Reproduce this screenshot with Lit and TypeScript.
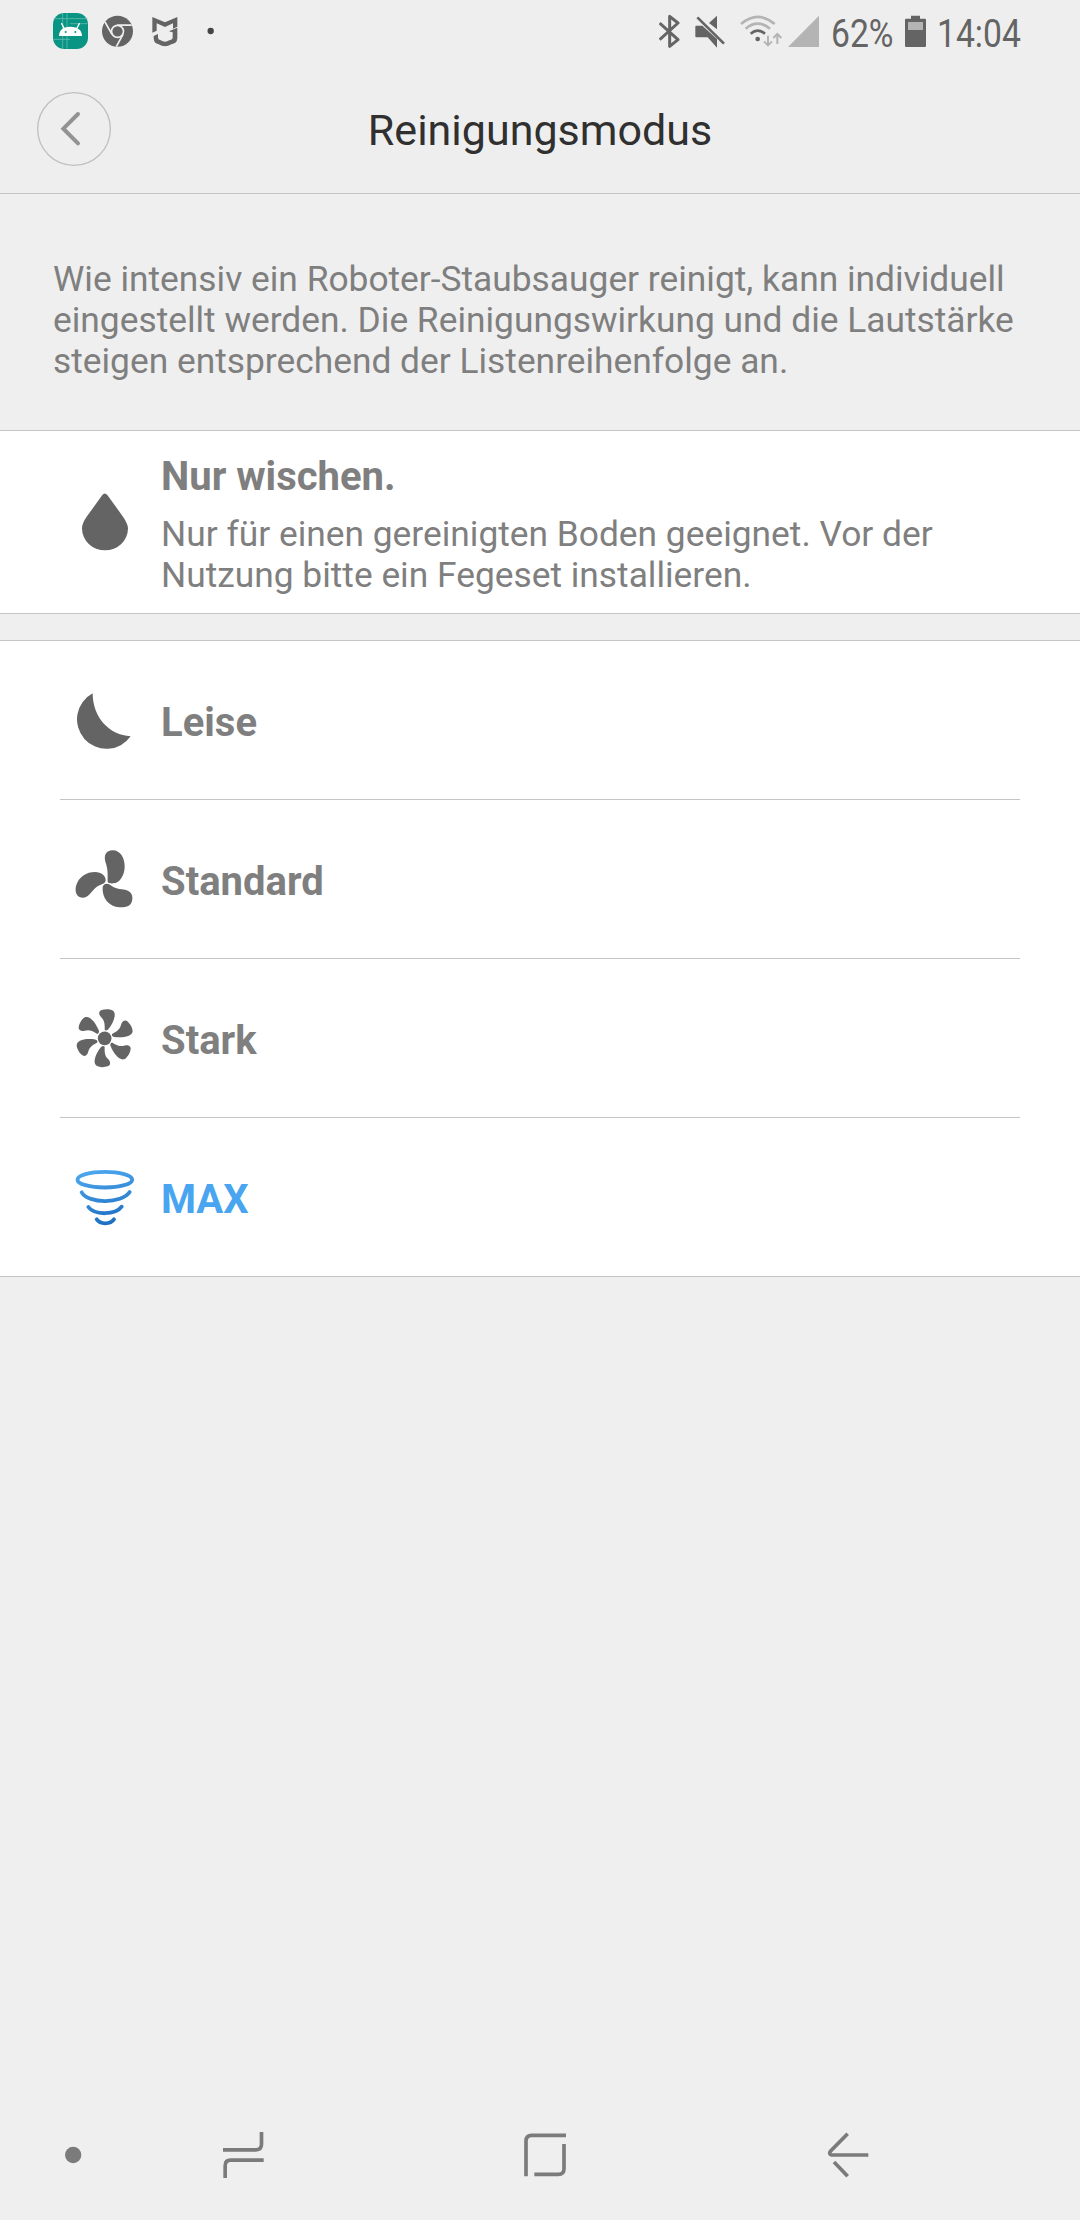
import { LitElement, html, css, svg } from "lit";
import { customElement, property } from "lit/decorators.js";
import { classMap } from "lit/directives/class-map.js";

// Icon coordinates are drawn at three units per CSS pixel.

@customElement("status-bar")
class StatusBar extends LitElement {
  static styles = css`
    :host { display: flex; height: 64px; align-items: flex-start; color: #646464; font-family: Roboto, sans-serif; }
    svg { display: block; height: 64px; flex: none; }
    .apps, .system { display: flex; }
    .apps { padding-left: 53px; flex: 1; }
    .android { width: 35px; }
    .chrome { width: 31px; margin-left: 14px; }
    .mi { width: 26px; margin-left: 19px; }
    .more { width: 7px; margin-left: 29px; }
    .system { padding-right: 58px; }
    .bt { width: 21px; }
    .mute { width: 30px; margin-left: 15px; }
    .wifi { width: 43px; margin-left: 15px; }
    .signal { width: 31px; margin-left: 5px; }
    .label { display: block; font-size: 38.5px; line-height: 68px; height: 64px; white-space: nowrap; transform: scaleX(0.875); transform-origin: 0 50%; }
    .percent { width: 62px; margin-left: 12px; }
    .battery { width: 21px; margin-left: 12px; }
    .time { width: 85px; margin-left: 11px; }
  `;
  render() {
    return html`
      <div class="apps">
        <svg class="android" viewBox="39 0 105 192">
          <rect x="39" y="39" width="105" height="108" rx="34" fill="#0a9484" />
          <path d="M68 40V146M81 40V146M40 56H143M90 71H143M40 118H90" stroke="#6fc5ba" stroke-width="2" fill="none" />
          <path d="M57 108C57 92 67 80 91 80S126 92 126 108Z" fill="#fff" />
          <path d="M72 84L65 71M111 84L118 71" stroke="#fff" stroke-width="4" stroke-linecap="round" />
          <circle cx="77" cy="96" r="3" fill="#0a9484" /><circle cx="106" cy="96" r="3" fill="#0a9484" />
        </svg>
        <svg class="chrome" viewBox="186 0 93 192">
          <circle cx="232.500" cy="94" r="46.500" fill="#646464" />
          <circle cx="232.500" cy="94" r="18" fill="#646464" stroke="#eee" stroke-width="5" />
          <path d="M232 75.500H275M216 103L195 66M249 103L229 140" stroke="#eee" stroke-width="5" fill="none" />
        </svg>
        <svg class="mi" viewBox="336 0 78 192" fill="#646464">
          <path d="M337 51L375 67L412 51V80L399 86V70L375 81L350 70V92L337 98Z" />
          <path d="M341 108L354 102V114Q355 120 362 121Q375 129 388 121Q397 120 398 114V97L387 94L412 83V115Q411 131 394 133Q375 145 356 133Q342 131 341 115Z" />
        </svg>
        <svg class="more" viewBox="501 0 21 192"><circle cx="512" cy="93" r="9.500" fill="#444" /></svg>
      </div>
      <div class="system">
        <svg class="bt" viewBox="57 0 63 192" fill="none" stroke="#646464" stroke-width="9">
          <path d="M59 69L114 119L89 139V49L114 69L59 119" stroke-linejoin="round" />
        </svg>
        <svg class="mute" viewBox="165 0 90 192" fill="#646464">
          <path d="M168 77H187L231 117V143L203 112H168Q166 112 166 108V81Q166 77 168 77ZM231 47V88L207 69Z" />
          <path d="M172 52L252 131" stroke="#646464" stroke-width="8" />
        </svg>
        <svg class="wifi" viewBox="300 0 129 192" fill="none" stroke="#b4b4b4" stroke-width="8">
          <path d="M303 72Q353 29 404 72M317 86Q353 56 390 86" />
          <path d="M332 101Q353 83 375 101" stroke="#646464" />
          <circle cx="353" cy="117" r="7" fill="#646464" stroke="none" />
          <path d="M384 107V134M372 124L384 136L396 124M412 132V104M400 114L412 102L424 114" stroke-width="6" />
        </svg>
        <svg class="signal" viewBox="444 0 93 192"><path d="M444 141H537V47Z" fill="#b4b4b4" /></svg>
        <span class="label percent">62%</span>
        <svg class="battery" viewBox="255 0 63 192">
          <path d="M273 47H300V56H315Q318 56 318 59V138Q318 141 315 141H258Q255 141 255 138V59Q255 56 258 56H273Z" fill="#646464" />
          <rect x="264" y="66" width="45" height="24" fill="#b4b4b4" />
        </svg>
        <span class="label time">14:04</span>
      </div>
    `;
  }
}

const icons = {
  drop: svg`<svg viewBox="105 33 180 546" fill="#646464"><path d="M187 225Q194 216 202 225L249 290Q264 312 264 325A69 66 0 0 1 126 325Q126 310 141 289Z"/></svg>`,
  moon: svg`<svg viewBox="75 -87 180 474" fill="#646464"><path d="M128 70A88.500 88.500 0 1 0 242 199C178 196 128 142 128 70Z"/></svg>`,
  fan: svg`<svg viewBox="75 -90 180 474" fill="#646464">
    <path d="M173 155C173 132 174 118 167 98C160 76 168 61 188 61C212 61 224 85 224 110C224 136 208 160 190 160Q175 161 173 155Z"/>
    <path d="M167 150C167 164 151 161 136 174C121 188 116 203 98 203C80 203 74 186 78 168C86 140 110 126 135 126C155 126 167 138 167 150Z"/>
    <path d="M158 171C160 161 172 158 181 165C195 177 209 176 228 180C245 184 250 200 246 213C243 228 228 233 208 232C178 230 155 205 158 171Z"/>
  </svg>`,
  turbine: svg`<svg viewBox="75 -93 180 474" fill="#646464">
    <circle cx="164" cy="145" r="20.500"/>
    ${[0, 60, 120, 180, 240, 300].map(
      (a) => svg`<path transform=${`rotate(${a} 164 144.500)`} d="M164 119C165 98 162 90 153 81C145 73 146 62 155 60C167 56 184 57 190 63C200 73 191 98 175 118Q169 124 164 119Z"/>`,
    )}
  </svg>`,
  tornado: svg`<svg viewBox="75 -96 180 474" fill="none" stroke="url(#swirl)" stroke-width="11.500" stroke-linecap="round">
    <defs><linearGradient id="swirl" gradientUnits="userSpaceOnUse" x1="140" y1="60" x2="180" y2="228"><stop stop-color="#4ba6ee"/><stop offset="1" stop-color="#1c6cc0"/></linearGradient></defs>
    <ellipse cx="164.500" cy="89" rx="82" ry="23.500"/>
    <path d="M95 127C115 162 215 162 239 126M115 171C133 196 196 196 215 170M140 208C150 224 182 224 192 208"/>
  </svg>`,
};

@customElement("mode-row")
class ModeRow extends LitElement {
  @property() icon: keyof typeof icons = "drop";
  @property() name = "";
  @property() detail = "";
  @property({ type: Boolean }) selected = false;

  static styles = css`
    :host { display: flex; align-items: center; padding-left: 75px; color: #7f7f7f; font-family: Roboto, sans-serif; }
    .icon { display: flex; width: 60px; margin-right: 26px; }
    svg { display: block; width: 60px; }
    .name { font-size: 40px; line-height: 48px; font-weight: 700; padding-top: 5px; }
    .detail { width: 800px; font-size: 35.34px; line-height: 41px; }
    .withDetail { padding: 4px 0 13px; }
    .selected { color: #4aa5f0; }
  `;
  render() {
    return html`
      <div class="icon">${icons[this.icon]}</div>
      <div>
        <div class=${classMap({ name: true, selected: this.selected, withDetail: !!this.detail })}>${this.name}</div>
        ${this.detail ? html`<div class="detail">${this.detail}</div>` : ""}
      </div>
    `;
  }
}

@customElement("nav-bar")
class NavBar extends LitElement {
  static styles = css`
    :host { display: flex; align-items: center; height: 130px; padding-left: 65px; }
    svg { display: block; height: 90px; fill: none; stroke: #7b7b7b; stroke-width: 11px; }
    .dot { width: 17px; fill: #7b7b7b; stroke: none; }
    .recents { width: 41px; margin-left: 141px; }
    .home { width: 42px; margin-left: 260px; }
    .back { width: 42px; margin-left: 261px; }
  `;
  render() {
    return html`
      <svg class="dot" viewBox="75 0 51 270"><circle cx="99.500" cy="135" r="24.500" /></svg>
      <svg class="recents" viewBox="549 0 123 270">
        <path d="M549 119.500H648Q664.500 119.500 664.500 103V66M671 150.500H572Q555.500 150.500 555.500 167V204" />
      </svg>
      <svg class="home" viewBox="72 0 126 270">
        <path d="M198 76H95Q78 76 78 93V199M192 102V176Q192 193 175 193H103" />
      </svg>
      <svg class="back" viewBox="982 0 126 270">
        <path d="M1106 135H996Q986 132 993 123L1044 71M1003 156L1044 199" />
      </svg>
    `;
  }
}

@customElement("app-root")
class AppRoot extends LitElement {
  static styles = css`
    :host { display: flex; flex-direction: column; height: 2220px; width: 1080px; background: #efefef; font-family: Roboto, sans-serif; overflow: hidden; }
    .top { background: #eee; border-bottom: 1px solid #c4c4c4; }
    header { display: grid; grid-template-columns: 74px 1fr 74px; align-items: center; padding: 0 37px; height: 129px; }
    .back { display: block; width: 74px; height: 74px; }
    h1 { margin: 0; text-align: center; font-weight: 400; font-size: 43px; line-height: 52px; color: #303030; padding-top: 2px; }
    .intro { box-sizing: border-box; height: 236px; margin: 0; padding: 65px 50px 0 53px; font-size: 35.34px; line-height: 41px; color: #7f7f7f; }
    .group { background: #fff; border-top: 1px solid #c4c4c4; border-bottom: 1px solid #c4c4c4; }
    .mop { height: 182px; }
    .modes { margin-top: 26px; }
    .mode { height: 158px; }
    .rule { height: 1px; background: #c4c4c4; margin: 0 60px; }
    .space { flex: 1; }
  `;
  private modes = [
    { icon: "moon", name: "Leise" },
    { icon: "fan", name: "Standard" },
    { icon: "turbine", name: "Stark" },
    { icon: "tornado", name: "MAX", selected: true },
  ];
  render() {
    return html`
      <div class="top">
        <status-bar></status-bar>
        <header>
          <svg class="back" viewBox="51 36 222 222" fill="none">
            <circle cx="162" cy="147" r="109" stroke="#c0c0c0" stroke-width="4" />
            <path d="M174 102L130 146L174 190" stroke="#929292" stroke-width="12" stroke-linecap="round" />
          </svg>
          <h1>Reinigungsmodus</h1>
        </header>
      </div>
      <p class="intro">Wie intensiv ein Roboter-Staubsauger reinigt, kann individuell<br />eingestellt werden. Die Reinigungswirkung und die Lautstärke<br />steigen entsprechend der Listenreihenfolge an.</p>
      <div class="group">
        <mode-row class="mop" icon="drop" name="Nur wischen." detail="Nur für einen gereinigten Boden geeignet. Vor der Nutzung bitte ein Fegeset installieren."></mode-row>
      </div>
      <div class="group modes">
        ${this.modes.map(
          (m, i) => html`${i ? html`<div class="rule"></div>` : ""}
            <mode-row class="mode" icon=${m.icon} name=${m.name} ?selected=${m.selected}></mode-row>`,
        )}
      </div>
      <div class="space"></div>
      <nav-bar></nav-bar>
    `;
  }
}
